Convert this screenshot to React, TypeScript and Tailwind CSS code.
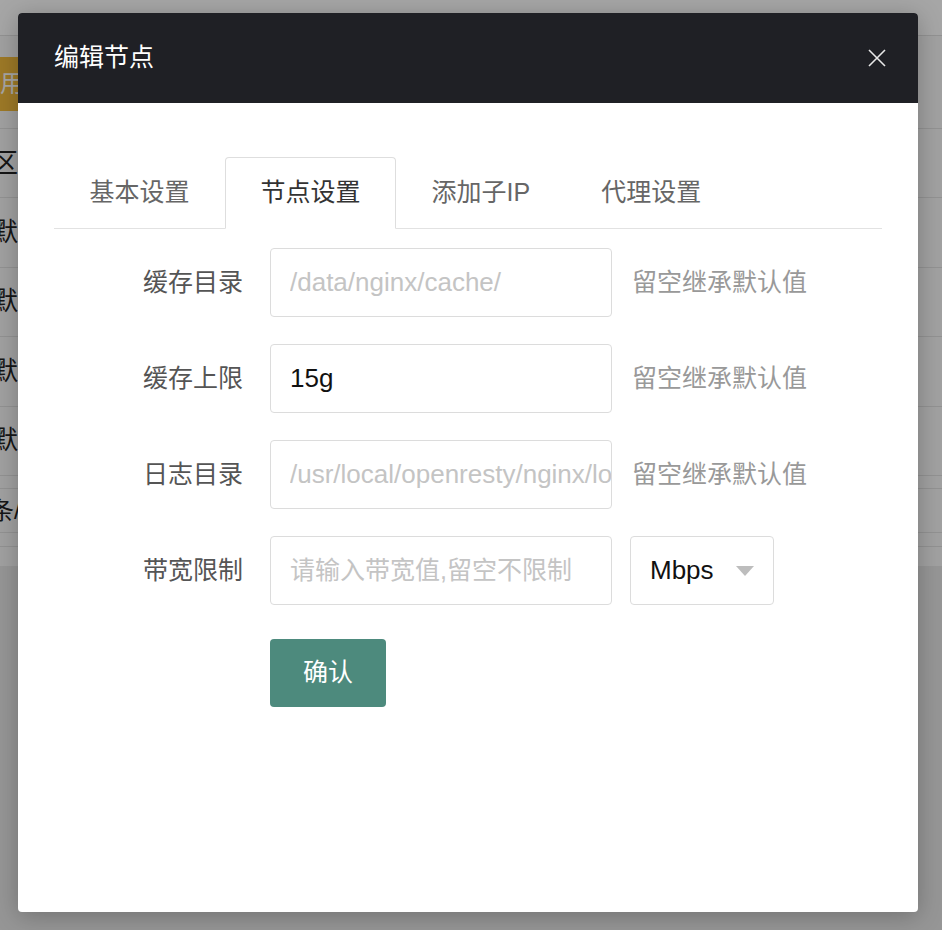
import React, { useState } from 'react';

const font = "font-['Liberation_Sans','Noto_Sans_CJK_SC',sans-serif]";

const tabs = ['基本设置', '节点设置', '添加子IP', '代理设置'];

// rows of the table behind the dialog, only the edges show
const bgRows = ['默认', '默认', '默认', '默认'];

const EditNodeDialog = () => {
  const [activeTab, setActiveTab] = useState(1);
  const [cacheLimit, setCacheLimit] = useState('15g');

  const fields = [
    { label: '缓存目录', placeholder: '/data/nginx/cache/', value: '' },
    { label: '缓存上限', placeholder: '', value: cacheLimit, onChange: setCacheLimit },
    { label: '日志目录', placeholder: '/usr/local/openresty/nginx/logs/', value: '' },
  ];

  return (
    <div className="absolute left-[18px] top-[13px] w-[900px] h-[899px] bg-white rounded-[4px] shadow-[0_4px_24px_rgba(0,0,0,0.25)] overflow-hidden">
      <div className="h-[90px] bg-[#1f2025] pl-[36px] pr-[32px] flex items-center justify-between">
        <h2 className="text-[25px] text-white font-normal">编辑节点</h2>
        <button className="w-[18px] h-[18px] flex items-center justify-center">
          <svg width="18" height="18" viewBox="0 0 18 18" fill="none" stroke="#e8e8e8" strokeWidth="1.6">
            <path d="M1 1L17 17M17 1L1 17" />
          </svg>
        </button>
      </div>

      <div className="px-[36px] pt-[54px]">
        <div className="flex border-b border-[#e2e2e2]">
          {tabs.map((t, i) => (
            <button
              key={t}
              onClick={() => setActiveTab(i)}
              className={
                i === activeTab
                  ? 'h-[72px] px-[34.5px] -mb-px border border-[#dedede] border-b-white rounded-t-[4px] bg-white text-[25px] text-[#333]'
                  : 'h-[72px] px-[34.5px] -mb-px border border-transparent text-[25px] text-[#666]'
              }
            >
              {t}
            </button>
          ))}
        </div>

        <div className="mt-[19px] flex flex-col gap-[27px]">
          {fields.map((f) => (
            <div key={f.label} className="flex items-center">
              <label className="w-[216px] pr-[27px] text-right text-[25px] text-[#555]">{f.label}</label>
              <input
                className="w-[342px] h-[69px] border border-[#dcdcdc] rounded-[4px] pl-[19px] pr-0 text-[26px] text-[#111] placeholder:text-[#c4c4c4] outline-none"
                placeholder={f.placeholder}
                value={f.value}
                onChange={(e) => f.onChange && f.onChange(e.target.value)}
              />
              <span className="ml-[20px] text-[25px] text-[#999]">留空继承默认值</span>
            </div>
          ))}

          <div className="flex items-center">
            <label className="w-[216px] pr-[27px] text-right text-[25px] text-[#555]">带宽限制</label>
            <input
              className="w-[342px] h-[69px] border border-[#dcdcdc] rounded-[4px] pl-[19px] pr-0 text-[25px] text-[#111] placeholder:text-[#c4c4c4] outline-none"
              placeholder="请输入带宽值,留空不限制"
            />
            <div className="ml-[18px] w-[144px] h-[69px] border border-[#dcdcdc] rounded-[4px] pl-[19px] pr-[19px] flex items-center justify-between">
              <span className="text-[26px] text-[#111]">Mbps</span>
              <svg width="18" height="10" viewBox="0 0 18 10">
                <path d="M0 0H18L9 10Z" fill="#bdbdbd" />
              </svg>
            </div>
          </div>
        </div>

        <div className="mt-[34px] pl-[216px]">
          <button className="w-[116px] h-[68px] rounded-[4px] bg-[#4d8a7d] text-white text-[25px]">确认</button>
        </div>
      </div>
    </div>
  );
};

const App = () => {
  return (
    <div className={`relative h-[930px] overflow-hidden bg-[#e6e6e6] ${font}`}>
      {/* page behind the dialog */}
      <div className="h-[566px] bg-[#f7f7f7]">
        <div className="h-[36px] bg-white border-b border-[#e0e0e0]" />
        <div className="h-[93px] border-b border-[#e0e0e0] pt-[21px]">
          <div className="-ml-[40px] w-[200px] h-[54px] bg-[#f2bb3c] text-[24px] text-white flex items-center pl-[16px]">
            启用节点
          </div>
        </div>
        <div className="h-[69px] border-b border-[#e0e0e0] flex items-center -ml-[8px] text-[26px] text-[#222]">区域</div>
        {bgRows.map((r, i) => (
          <div key={i} className="h-[69.5px] border-b border-[#e0e0e0] flex items-center -ml-[8px] text-[26px] text-[#222]">
            {r}
          </div>
        ))}
        <div className="h-[13px] border-b border-[#e0e0e0]" />
        <div className="h-[44px] border-b border-[#e0e0e0] flex items-center -ml-[10px] text-[24px] text-[#222]">条/页</div>
        <div className="h-[14px] border-b border-[#e0e0e0]" />
      </div>

      <div className="absolute inset-0 bg-black/[0.35]" />

      <EditNodeDialog />
    </div>
  );
};

export default App;
